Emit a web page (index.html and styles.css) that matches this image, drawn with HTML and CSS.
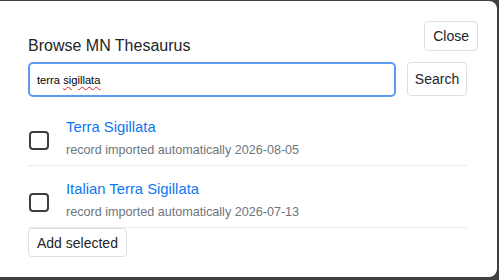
FILE: index.html
```html
<!DOCTYPE html>
<html lang="en">
<head>
<meta charset="utf-8">
<title>Browse MN Thesaurus</title>
<link rel="stylesheet" href="styles.css">
</head>
<body>
<div class="modal">
  <div class="header">
    <h2 class="title">Browse MN Thesaurus</h2>
    <button class="btn btn-close" type="button">Close</button>
  </div>
  <div class="search-row">
    <div class="search-input">terra <span class="misspelled">sigillata</span></div>
    <button class="btn btn-search" type="button">Search</button>
  </div>
  <ul class="results">
    <li class="result">
      <span class="check"></span>
      <div class="result-text">
        <a class="result-link" href="#">Terra Sigillata</a>
        <div class="result-meta">record imported automatically 2026-08-05</div>
      </div>
    </li>
    <li class="result">
      <span class="check"></span>
      <div class="result-text">
        <a class="result-link" href="#">Italian Terra Sigillata</a>
        <div class="result-meta">record imported automatically 2026-07-13</div>
      </div>
    </li>
  </ul>
  <button class="btn btn-add" type="button">Add selected</button>
</div>
</body>
</html>
```

FILE: styles.css
```css
* { box-sizing: border-box; }

html, body {
  margin: 0;
  padding: 0;
  height: 280px;
  overflow: hidden;
}

body {
  background: #404040;
  font-family: "Liberation Sans", Arial, sans-serif;
  color: #212529;
}

.modal {
  margin-top: 1px;
  width: 497px;
  height: 276px;
  background: #ffffff;
  border-radius: 0 8px 8px 0;
  padding: 0 30px 0 28px;
}

.header {
  display: flex;
  justify-content: space-between;
  align-items: flex-start;
  padding-top: 20px;
  margin-right: -11px;
}

.title {
  margin: 13px 0 0 0;
  font-size: 16px;
  font-weight: normal;
  line-height: 24px;
}

.btn {
  font-family: "Liberation Sans", Arial, sans-serif;
  font-size: 14px;
  color: #212529;
  background: #ffffff;
  border: 1px solid #dcdfe3;
  border-radius: 4px;
  padding: 0 8px;
  line-height: 1;
  cursor: pointer;
}

.btn-close { height: 30px; }

.search-row {
  display: flex;
  align-items: flex-start;
  gap: 11px;
  margin-top: 4px;
}

.search-input {
  flex: 1;
  height: 35px;
  border: 2px solid #5b9cf2;
  border-radius: 5px;
  padding: 0 7px;
  font-size: 11.2px;
  color: #000;
  display: flex;
  align-items: center;
  white-space: pre;
}

.misspelled {
  text-decoration: underline wavy #e0201c;
  text-decoration-thickness: 1px;
  text-underline-offset: 2px;
}

.btn-search { height: 34px; width: 60px; padding: 0; }

.results {
  list-style: none;
  margin: 7px 0 0 0;
  padding: 0;
}

.result {
  display: flex;
  align-items: flex-start;
  gap: 17px;
  height: 62px;
  padding: 13px 0 6px 1px;
  border-bottom: 1px solid #e9ecef;
}

.check {
  flex: none;
  width: 20px;
  height: 19px;
  margin-top: 14px;
  border: 2px solid #3d3d3d;
  border-radius: 4px;
}

.result-text {
  display: flex;
  flex-direction: column;
  gap: 4px;
}

.result-link {
  font-size: 14.8px;
  line-height: 20px;
  color: #0b78f2;
  text-decoration: none;
}

.result-meta {
  font-size: 12.6px;
  line-height: 18px;
  color: #6c757d;
}

.btn-add { height: 29px; }
```
